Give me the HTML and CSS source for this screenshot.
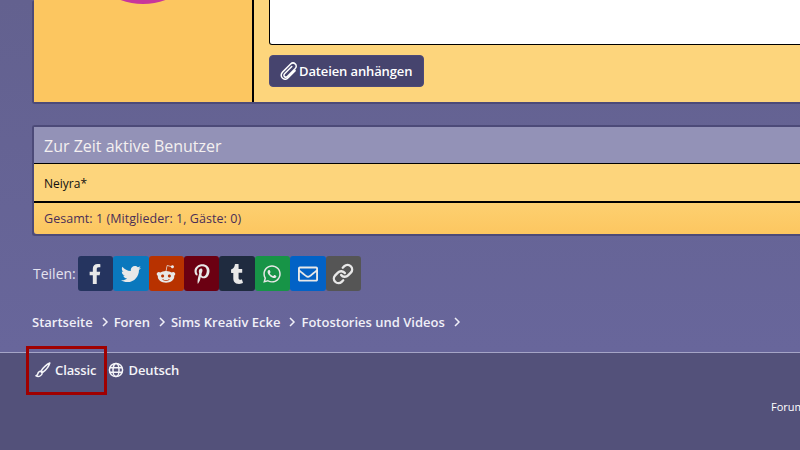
FILE: index.html
```html
<!DOCTYPE html>
<html lang="de">
<head>
<meta charset="utf-8">
<title>Zur Zeit aktive Benutzer</title>
<link rel="stylesheet" href="styles.css">
</head>
<body>
<div class="page">
  <main class="content">
    <section class="reply panel">
      <div class="reply-user"><div class="avatar"></div></div>
      <div class="reply-main">
        <div class="editor"></div>
        <button class="attach" type="button">
          <svg class="clip" viewBox="0 0 512 512"><path fill="none" stroke="currentColor" stroke-width="42" stroke-linecap="round" d="M335 130 L130 335 c-25 25 -25 60 0 80 c22 20 55 20 78 -3 L432 188 c40 -42 40 -98 0 -134 c-38 -36 -92 -34 -130 4 L72 288 c-50 50 -50 122 -4 166 c46 44 116 42 164 -6 L432 250"/></svg>
          <span>Dateien anhängen</span>
        </button>
      </div>
    </section>

    <section class="online panel">
      <h2 class="online-head">Zur Zeit aktive Benutzer</h2>
      <div class="online-body">Neiyra*</div>
      <div class="online-foot">Gesamt: 1 (Mitglieder: 1, Gäste: 0)</div>
    </section>

    <div class="share">
      <span class="share-label">Teilen:</span>
      <div class="share-buttons">
        <a class="sb fb"><svg viewBox="0 0 320 512"><path d="M279.14 288l14.22-92.66h-88.91v-60.13c0-25.35 12.42-50.06 52.24-50.06h40.42V6.26S260.43 0 225.36 0c-73.22 0-121.08 44.38-121.08 124.72v70.62H22.89V288h81.39v224h100.17V288z"/></svg></a>
        <a class="sb tw"><svg viewBox="0 0 512 512"><path d="M459.37 151.716c.325 4.548.325 9.097.325 13.645 0 138.72-105.583 298.558-298.558 298.558-59.452 0-114.68-17.219-161.137-47.106 8.447.974 16.568 1.299 25.34 1.299 49.055 0 94.213-16.568 130.274-44.832-46.132-.975-84.792-31.188-98.112-72.772 6.498.974 12.995 1.624 19.818 1.624 9.421 0 18.843-1.3 27.614-3.573-48.081-9.747-84.143-51.98-84.143-102.985v-1.299c13.969 7.797 30.214 12.67 47.431 13.319-28.264-18.843-46.781-51.005-46.781-87.391 0-19.492 5.197-37.36 14.294-52.954 51.655 63.675 129.3 105.258 216.365 109.807-1.624-7.797-2.599-15.918-2.599-24.04 0-57.828 46.782-104.934 104.934-104.934 30.213 0 57.502 12.67 76.67 33.137 23.715-4.548 46.456-13.32 66.599-25.34-7.798 24.366-24.366 44.833-46.132 57.827 21.117-2.273 41.584-8.122 60.426-16.243-14.292 20.791-32.161 39.308-52.628 54.253z"/></svg></a>
        <a class="sb rd"><svg viewBox="0 0 512 512"><path d="M440.3 203.5c-15 0-28.2 6.2-37.9 15.9-35.7-24.7-83.8-40.6-137.1-42.3L293 52.3l88.2 19.8c0 21.6 17.6 39.2 39.2 39.2 22 0 39.7-18.1 39.7-39.7s-17.6-39.7-39.7-39.7c-15.4 0-28.7 9.3-35.3 22l-97.4-21.6c-4.9-1.3-9.7 2.2-11 7.1L246.3 177c-52.9 2.2-100.5 18.1-136.3 42.8-9.7-10.1-23.4-16.3-38.4-16.3-55.6 0-73.8 74.6-22.9 100.1-1.8 7.9-2.6 16.3-2.6 24.7 0 83.8 94.4 151.7 210.3 151.7 116.4 0 210.8-67.9 210.8-151.7 0-8.4-.9-17.2-3.1-25.1 49.9-25.6 31.5-99.7-23.8-99.7zM129.4 308.9c0-22 17.6-39.7 39.7-39.7 21.6 0 39.2 17.6 39.2 39.7 0 21.6-17.6 39.2-39.2 39.2-22 .1-39.7-17.6-39.7-39.2zm214.3 93.5c-36.4 36.4-139.1 36.4-175.5 0-4-3.5-4-9.7 0-13.7 3.5-3.5 9.7-3.5 13.2 0 27.8 28.5 120 29 149 0 3.5-3.5 9.7-3.5 13.2 0 4.1 4 4.1 10.2.1 13.7zm-.8-54.2c-21.6 0-39.2-17.6-39.2-39.2 0-22 17.6-39.7 39.2-39.7 22 0 39.7 17.6 39.7 39.7-.1 21.5-17.7 39.2-39.7 39.2z"/></svg></a>
        <a class="sb pi"><svg viewBox="0 0 384 512"><path d="M204 6.5C101.4 6.5 0 74.9 0 185.6 0 256 39.6 296 63.6 296c9.9 0 15.6-27.6 15.6-35.4 0-9.3-23.7-29.1-23.7-67.8 0-80.4 61.2-137.4 140.4-137.4 68.1 0 118.5 38.7 118.5 109.8 0 53.1-21.3 152.7-90.3 152.7-24.9 0-46.2-18-46.2-43.8 0-37.8 26.4-74.4 26.4-113.4 0-66.2-93.9-54.2-93.9 25.8 0 16.8 2.1 35.4 9.6 50.7-13.8 59.4-42 147.9-42 209.1 0 18.9 2.7 37.5 4.5 56.4 3.4 3.8 1.7 3.4 6.9 1.5 50.4-69 48.6-82.5 71.4-172.8 12.3 23.4 44.1 36 69.3 36 106.2 0 153.9-103.5 153.9-196.8C384 71.3 298.2 6.5 204 6.5z"/></svg></a>
        <a class="sb tu"><svg viewBox="0 0 320 512"><path d="M309.8 480.3c-13.6 14.5-50 31.7-97.4 31.7-120.8 0-147-88.8-147-140.6v-144H17.9c-5.5 0-10-4.5-10-10v-68c0-7.2 4.5-13.6 11.3-16 62-21.8 81.5-76 84.3-117.1.8-11 6.5-16.3 16.1-16.3h70.9c5.5 0 10 4.5 10 10v115.2h83c5.5 0 10 4.4 10 9.9v81.7c0 5.5-4.5 10-10 10h-83.4V360c0 34.2 23.7 53.6 68 35.8 4.8-1.9 9-3.2 12.7-2.2 3.5.9 5.8 3.4 7.4 7.9l22 64.3c1.8 5 3.3 10.6-.4 14.5z"/></svg></a>
        <a class="sb wa"><svg viewBox="0 0 448 512"><path d="M380.9 97.1C339 55.1 283.2 32 223.9 32c-122.4 0-222 99.6-222 222 0 39.1 10.2 77.3 29.6 111L0 480l117.7-30.9c32.4 17.7 68.9 27 106.1 27h.1c122.3 0 224.1-99.6 224.1-222 0-59.3-25.2-115-67.1-157zm-157 341.6c-33.2 0-65.7-8.9-94-25.7l-6.7-4-69.8 18.3L72 359.2l-4.4-7c-18.5-29.4-28.2-63.3-28.2-98.2 0-101.7 82.8-184.5 184.6-184.5 49.3 0 95.6 19.2 130.4 54.1 34.8 34.9 56.2 81.2 56.1 130.5 0 101.8-84.9 184.6-186.6 184.6zm101.2-138.2c-5.5-2.8-32.8-16.2-37.9-18-5.1-1.9-8.8-2.8-12.5 2.8-3.7 5.6-14.3 18-17.6 21.8-3.2 3.7-6.5 4.2-12 1.4-32.6-16.3-54-29.1-75.5-66-5.7-9.8 5.7-9.1 16.3-30.3 1.8-3.7.9-6.9-.5-9.7-1.4-2.8-12.5-30.1-17.1-41.2-4.5-10.8-9.1-9.3-12.5-9.5-3.2-.2-6.9-.2-10.6-.2-3.7 0-9.7 1.4-14.8 6.9-5.1 5.6-19.4 19-19.4 46.3 0 27.3 19.9 53.7 22.6 57.4 2.8 3.7 39.1 59.7 94.8 83.8 35.2 15.2 49 16.5 66.6 13.9 10.7-1.6 32.8-13.4 37.4-26.4 4.6-13 4.6-24.1 3.2-26.4-1.3-2.5-5-3.9-10.5-6.6z"/></svg></a>
        <a class="sb em"><svg viewBox="0 0 512 512"><path d="M464 64H48C21.49 64 0 85.49 0 112v288c0 26.51 21.49 48 48 48h416c26.51 0 48-21.49 48-48V112c0-26.51-21.49-48-48-48zm0 48v40.805c-22.422 18.259-58.168 46.651-134.587 106.49-16.841 13.247-50.201 45.072-73.413 44.701-23.208.375-56.579-31.459-73.413-44.701C106.18 199.465 70.425 171.067 48 152.805V112h416zM48 400V214.398c22.914 18.251 55.409 43.862 104.938 82.646 21.857 17.205 60.134 55.186 103.062 54.955 42.717.231 80.509-37.199 103.053-54.947 49.528-38.783 82.032-64.401 104.947-82.653V400H48z"/></svg></a>
        <a class="sb ln"><svg class="chain" viewBox="0 0 24 24"><path d="M10 13a5 5 0 0 0 7.54.54l3-3a5 5 0 0 0-7.07-7.07l-1.72 1.71"/><path d="M14 11a5 5 0 0 0-7.54-.54l-3 3a5 5 0 0 0 7.07 7.07l1.71-1.71"/></svg></a>
      </div>
    </div>

    <nav class="crumbs">
      <a>Startseite</a><svg class="chev" viewBox="0 0 8 12"><path d="M2 2l4 4-4 4"/></svg>
      <a>Foren</a><svg class="chev" viewBox="0 0 8 12"><path d="M2 2l4 4-4 4"/></svg>
      <a>Sims Kreativ Ecke</a><svg class="chev" viewBox="0 0 8 12"><path d="M2 2l4 4-4 4"/></svg>
      <a>Fotostories und Videos</a><svg class="chev" viewBox="0 0 8 12"><path d="M2 2l4 4-4 4"/></svg>
    </nav>
  </main>

  <footer class="footer">
    <div class="footer-links">
      <a class="flink">
        <svg class="ficon" viewBox="0 0 16 16"><path fill="none" stroke="currentColor" stroke-width="1.500" stroke-linejoin="round" d="M14.800 1c-2.800 1.200-6.800 5-8.600 7.800l1.500 1.500c2.700-1.900 6.200-6 7.100-9.300z M5.600 9.300c-1.700.1-2.500 1.200-2.800 2.600-.2 1-.7 1.500-1.800 1.900 2.200 1.200 6 .7 6.200-2.900z"/></svg>
        <span>Classic</span>
      </a>
      <a class="flink">
        <svg class="ficon" viewBox="0 0 16 16"><g fill="none" stroke="currentColor" stroke-width="1.500"><circle cx="8" cy="8" r="6.600"/><ellipse cx="8" cy="8" rx="3" ry="6.600"/><path d="M1.800 5.700h12.400M1.800 10.300h12.400"/></g></svg>
        <span>Deutsch</span>
      </a>
    </div>
    <div class="copyright">Forum</div>
    <div class="highlight"></div>
  </footer>
</div>
</body>
</html>
```

FILE: styles.css
```css
* { box-sizing: border-box; }
html, body { margin: 0; height: 450px; overflow: hidden; }
body {
  font-family: "Open Sans", "Noto Sans", sans-serif;
  font-size: 12px;
  color: #fff;
  background: #53517a;
}
.page { width: 800px; height: 450px; overflow: hidden; display: flex; flex-direction: column; }
.content {
  height: 352px;
  padding: 0 0 0 32px;
  background: linear-gradient(#63618f, #68669b);
}
.panel {
  width: 900px;
  border: 2px solid #4c4a78;
  border-top: 0;
  border-right: 0;
  border-radius: 3px;
}
.reply { display: flex; height: 104px; background: #fdd57c; }
.reply-user {
  width: 220px;
  height: 102px;
  background: #fcc660;
  border-right: 2px solid #000;
  display: flex;
  justify-content: center;
  overflow: hidden;
}
.avatar {
  flex: none;
  width: 130px;
  height: 130px;
  margin-top: -126px;
  border-radius: 50%;
  background: #c8359c;
}
.reply-main { flex: 1; padding: 0 0 0 15px; }
.editor {
  height: 45px;
  background: #fff;
  border: 1px solid #000;
  border-top: 0;
  border-radius: 0 0 0 3px;
}
.attach {
  display: flex;
  align-items: center;
  gap: 1px;
  width: 155px;
  height: 32px;
  margin-top: 10px;
  padding: 0 0 0 10px;
  border: 1px solid #4c4a78;
  border-radius: 4px;
  background: #46446e;
  color: #fff;
  font: 600 13px "Open Sans", "Noto Sans", sans-serif;
  letter-spacing: -0.12px;
}
.clip { width: 18px; height: 18px; flex: none; }
.online { margin-top: 21px; border-top: 2px solid #4c4a78; height: 111px; display: flex; flex-direction: column; }
.online-head {
  margin: 0;
  height: 37px;
  padding: 0 0 0 10px;
  background: #9392b7;
  border-bottom: 1px solid #000;
  color: #f4f0f0;
  font-size: 16px;
  font-weight: 400;
  line-height: 38px;
}
.online-body {
  height: 39px;
  padding: 0 0 0 10px;
  background: #fdd57c;
  border-bottom: 2px solid #000;
  color: #111;
  line-height: 39px;
}
.online-foot {
  flex: 1;
  padding: 0 0 0 10px;
  background: linear-gradient(#fdd070, #fcc660);
  color: #4a2f57;
  font-size: 12.500px;
  letter-spacing: 0.05px;
  line-height: 31px;
  border-radius: 0 0 0 3px;
}
.share { display: flex; align-items: center; gap: 2px; margin: 20px 0 0; height: 35px; }
.share-label { font-size: 14px; color: #e4e3ef; margin-left: 1px; }
.share-buttons { display: flex; gap: 0; }
.sb { width: 35.400px; height: 35px; border-radius: 3px; display: flex; align-items: center; justify-content: center; }
.sb svg { height: 20px; width: 20px; fill: #e8e8e8; }
.sb .chain { fill: none; stroke: #e8e8e8; stroke-width: 2.600; stroke-linecap: round; stroke-linejoin: round; height: 22px; width: 22px; }
.fb { background: #25345f; }
.tw { background: #0a78bd; }
.rd { background: #b83200; }
.pi { background: #6b0012; }
.tu { background: #1f2b3f; }
.wa { background: #179447; }
.em { background: #0262c6; }
.ln { background: #555555; }
.crumbs { display: flex; align-items: center; height: 18px; margin: 22px 0 0; font-size: 13px; font-weight: 600; color: #f0eff7; }
.chev { width: 8px; height: 12px; margin: 0 5px 0 8px; fill: none; stroke: #f0eff7; stroke-width: 1.500; }
.footer { position: relative; flex: 1; background: #53517a; border-top: 1px solid #a5a4c6; }
.footer-links { display: flex; gap: 12px; padding: 8px 0 0 35px; font-size: 13px; font-weight: 600; letter-spacing: -0.1px; color: #f4f4f8; }
.flink { display: flex; align-items: center; gap: 4px; height: 18px; }
.ficon { width: 16px; height: 16px; flex: none; }
.copyright { margin: 20px 0 0 771px; width: 60px; height: 16px; font-size: 11px; line-height: 16px; color: #fff; }
.highlight {
  position: absolute;
  left: 26px;
  top: -7px;
  width: 81px;
  height: 49px;
  border: 3px solid #a00000;
}
```
